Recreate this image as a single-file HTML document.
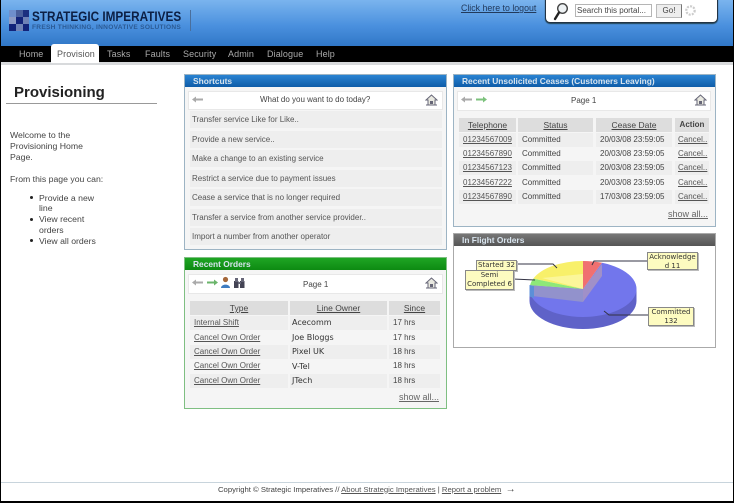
<!DOCTYPE html>
<html><head><meta charset="utf-8"><style>
html,body{margin:0;padding:0}
body{width:734px;height:503px;overflow:hidden;background:#fff;position:relative;font-family:"Liberation Sans",sans-serif;color:#444}
#w{position:absolute;left:0;top:0;width:734px;height:503px;filter:blur(.35px);overflow:hidden}
.a{position:absolute;white-space:nowrap}
.hd{background:linear-gradient(#7ab4ee 0,#4a90de 55%,#2f76c6 100%)}
.nav{font-size:9px;color:#aaa;top:49px;letter-spacing:.1px}
.p{position:absolute;box-sizing:border-box;background:#f5f5f5;border:1px solid #9db4c4}
.ph{position:absolute;left:0;top:0;right:0;height:12px;font:bold 8.4px/12px "Liberation Sans",sans-serif;color:#d8e4ee;padding-left:8px;box-sizing:border-box;white-space:nowrap}
.blue{background:linear-gradient(#2a83d2,#0e5ca8)}
.bar{position:absolute;background:#fff;border:1px solid #e8e8e8;box-sizing:border-box}
.r{position:absolute;left:5px;width:252px;height:17px;background:#eee;font-size:8px;line-height:17px;color:#555;padding-left:2px;box-sizing:border-box;white-space:nowrap}
.c{position:absolute;font-size:8px;line-height:14px;white-space:nowrap;box-sizing:border-box;color:#444}
.u{text-decoration:underline;color:#555}
.th{text-align:center;font-size:8.5px;color:#444;background:#ddd}
.g{background:#eee}
.d{font-family:"DejaVu Sans",sans-serif;color:#333;font-size:8px}
.lb{position:absolute;box-sizing:border-box;background:#fdfbc0;border:1px solid #888;box-shadow:1px 1px 0 #bbb;font:7px/9px "DejaVu Sans",sans-serif;text-align:center;color:#333;white-space:nowrap}
</style></head><body><div id="w">
<div class="a hd" style="left:0;top:0;width:734px;height:47px"></div>
<div class="a" style="left:0;top:46px;width:734px;height:16px;background:#000"></div>
<div class="a" style="left:0;top:62px;width:734px;height:3px;background:#d8dadc"></div>
<div class="a" style="left:51px;top:44px;width:48px;height:19px;background:#fff;border-radius:3px 3px 0 0"></div>

<svg class="a" style="left:9px;top:10px" width="20" height="21" viewBox="0 0 20 21"><rect width="20" height="21" fill="#5a6fa8"/><rect x="0" y="0" width="7" height="7" fill="#6f8fcc"/><rect x="7" y="0" width="7" height="7" fill="#4a5f9c"/><rect x="14" y="0" width="6" height="7" fill="#1c2f7f"/><rect x="0" y="7" width="7" height="7" fill="#8e9cc5"/><rect x="7" y="7" width="7" height="7" fill="#12237a"/><rect x="14" y="7" width="6" height="7" fill="#6f82b6"/><rect x="0" y="14" width="7" height="7" fill="#12237a"/><rect x="7" y="14" width="7" height="7" fill="#6f82b6"/><rect x="14" y="14" width="6" height="7" fill="#12237a"/></svg>
<div class="a" style="left:32px;top:8.5px;font:bold 14px/15px 'Liberation Sans',sans-serif;color:#0c1f44;transform:scaleX(.84);transform-origin:0 0">STRATEGIC IMPERATIVES</div>
<div class="a" style="left:32px;top:23.5px;font:bold 6.6px/8px 'Liberation Sans',sans-serif;color:#2b5a94;letter-spacing:.27px">FRESH THINKING, INNOVATIVE SOLUTIONS</div>
<div class="a" style="left:190px;top:10px;width:1px;height:21px;background:#4a6f9c"></div>

<div class="a nav" style="left:19px">Home</div>
<div class="a nav" style="left:57px;color:#555">Provision</div>
<div class="a nav" style="left:107px">Tasks</div>
<div class="a nav" style="left:145px">Faults</div>
<div class="a nav" style="left:183px">Security</div>
<div class="a nav" style="left:228px">Admin</div>
<div class="a nav" style="left:267px">Dialogue</div>
<div class="a nav" style="left:316px">Help</div>

<div class="a" style="left:461px;top:3px;font-size:8.8px;color:#223a5c;text-decoration:underline">Click here to logout</div>
<div class="a" style="left:545px;top:-6px;width:173px;height:29px;background:#fff;border:1px solid #234;box-sizing:border-box;border-radius:5px;box-shadow:0 1px 1px #245"></div>
<svg class="a" style="left:553px;top:2px" width="16" height="19" viewBox="0 0 16 19"><circle cx="9.5" cy="6.5" r="4.8" fill="#eef2f4" stroke="#444" stroke-width="1.4"/><path d="M6 10.5L2 17" stroke="#222" stroke-width="2.4" stroke-linecap="round"/></svg>
<div class="a" style="left:575px;top:4px;width:77px;height:13px;border:1px solid #b5b5b5;box-sizing:border-box;font-size:8px;line-height:11px;padding-left:1px;color:#444;background:#fff">Search this portal...</div>
<div class="a" style="left:656px;top:4px;width:26px;height:14px;background:#eee;border:1px solid #bbb;border-right:1px solid #777;box-sizing:border-box;font-size:8px;line-height:12px;text-align:center;color:#444">Go!</div>
<svg class="a" style="left:684px;top:4px" width="13" height="13" viewBox="0 0 13 13"><circle cx="6.5" cy="6.5" r="4.2" fill="none" stroke="#ccc" stroke-width="2.2" stroke-dasharray="2 1.2"/></svg>

<div class="a" style="left:14px;top:84px;font:bold 15px/18px 'Liberation Sans',sans-serif;color:#222">Provisioning</div>
<div class="a" style="left:6px;top:103px;width:151px;height:1px;background:#999"></div>
<div class="a" style="left:10px;top:130px;font-size:8.7px;line-height:11px;color:#444">Welcome to the<br>Provisioning Home<br>Page.</div>
<div class="a" style="left:10px;top:174px;font-size:8.7px;line-height:11px;color:#444">From this page you can:</div>
<div class="a" style="left:39px;top:192.5px;font-size:8.7px;line-height:10.8px;color:#444">Provide a new<br>line<br>View recent<br>orders<br>View all orders</div>
<div class="a" style="left:30px;top:196px;width:3px;height:3px;border-radius:2px;background:#222"></div>
<div class="a" style="left:30px;top:218px;width:3px;height:3px;border-radius:2px;background:#222"></div>
<div class="a" style="left:30px;top:239px;width:3px;height:3px;border-radius:2px;background:#222"></div>

<!-- Shortcuts -->
<div class="p" style="left:184px;top:74px;width:263px;height:176px">
<div class="ph blue">Shortcuts</div>
<div class="bar" style="left:3px;top:16px;width:255px;height:19px"></div>
<div class="a" style="left:75px;top:20px;font-size:8px;line-height:10px;color:#444">What do you want to do today?</div>
<svg class="a" style="left:7px;top:21px" width="12" height="7"><path d="M0 3.5L4 .5V2.5H11V4.5H4V6.5Z" fill="#aaa"/></svg>
<svg class="a" style="left:240px;top:19px" width="13" height="12"><path d="M6.5 1L1 6H3V11H10V6H12Z" fill="#e8e8e0" stroke="#667" stroke-width="1"/><path d="M1 11H12" stroke="#667"/><rect x="5" y="7" width="3" height="3" fill="#667"/></svg>
<div class="r" style="top:36px">Transfer service Like for Like..</div>
<div class="r" style="top:55.5px">Provide a new service..</div>
<div class="r" style="top:75px">Make a change to an existing service</div>
<div class="r" style="top:94.5px">Restrict a service due to payment issues</div>
<div class="r" style="top:114px">Cease a service that is no longer required</div>
<div class="r" style="top:133.5px">Transfer a service from another service provider..</div>
<div class="r" style="top:153px">Import a number from another operator</div>
</div>

<!-- Recent Orders -->
<div class="p" style="left:184px;top:257px;width:263px;height:152px;border-color:#7fbf82">
<div class="ph" style="background:linear-gradient(#1fa524,#0d8a12)">Recent Orders</div>
<div class="bar" style="left:3px;top:16px;width:255px;height:20px"></div>
<svg class="a" style="left:7px;top:21px" width="12" height="7"><path d="M0 3.5L4 .5V2.5H11V4.5H4V6.5Z" fill="#aaa"/></svg>
<svg class="a" style="left:21px;top:21px" width="12" height="7"><path d="M12 3.5L8 .5V2.5H1V4.5H8V6.5Z" fill="#6bb56b"/></svg>
<svg class="a" style="left:35px;top:18px" width="11" height="13"><circle cx="5.5" cy="3.5" r="2.6" fill="#a5683a"/><path d="M1 12C1 7.500 10 7.500 10 12Z" fill="#3f7cc0"/></svg>
<svg class="a" style="left:49px;top:20px" width="11" height="10"><rect x="0" y="3" width="4.500" height="7" fill="#445"/><rect x="6" y="3" width="4.500" height="7" fill="#445"/><rect x="1" y="0" width="3" height="4" fill="#667"/><rect x="7" y="0" width="3" height="4" fill="#667"/><rect x="4" y="4" width="3" height="2" fill="#667"/></svg>
<div class="a" style="left:118px;top:22px;font-size:8px;line-height:10px">Page 1</div>
<svg class="a" style="left:240px;top:19px" width="13" height="12"><path d="M6.5 1L1 6H3V11H10V6H12Z" fill="#e8e8e0" stroke="#667" stroke-width="1"/><path d="M1 11H12" stroke="#667"/><rect x="5" y="7" width="3" height="3" fill="#667"/></svg>
<div class="c th" style="left:5px;top:43px;width:98px"><span class="u" style="color:#444">Type</span></div>
<div class="c th" style="left:105px;top:43px;width:97px"><span class="u" style="color:#444">Line Owner</span></div>
<div class="c th" style="left:204px;top:43px;width:51px"><span class="u" style="color:#444">Since</span></div>
<div class="c g" style="left:5px;top:58px;width:98px;padding-left:4px"><span class="u">Internal Shift</span></div><div class="c g d" style="left:105px;top:58px;width:97px;padding-left:2px">Acecomm</div><div class="c g" style="left:204px;top:58px;width:51px;padding-left:4px">17 hrs</div>
<div class="c" style="left:5px;top:72.500px;width:98px;padding-left:4px"><span class="u">Cancel Own Order</span></div><div class="c d" style="left:105px;top:72.500px;padding-left:2px">Joe Bloggs</div><div class="c" style="left:204px;top:72.500px;padding-left:4px">17 hrs</div>
<div class="c g" style="left:5px;top:87px;width:98px;padding-left:4px"><span class="u">Cancel Own Order</span></div><div class="c g d" style="left:105px;top:87px;width:97px;padding-left:2px">Pixel UK</div><div class="c g" style="left:204px;top:87px;width:51px;padding-left:4px">18 hrs</div>
<div class="c" style="left:5px;top:101px;width:98px;padding-left:4px"><span class="u">Cancel Own Order</span></div><div class="c d" style="left:105px;top:101.500px;padding-left:2px">V-Tel</div><div class="c" style="left:204px;top:101px;padding-left:4px">18 hrs</div>
<div class="c g" style="left:5px;top:116px;width:98px;padding-left:4px"><span class="u">Cancel Own Order</span></div><div class="c g d" style="left:105px;top:116px;width:97px;padding-left:2px">JTech</div><div class="c g" style="left:204px;top:116px;width:51px;padding-left:4px">18 hrs</div>
<div class="a u" style="right:7px;top:133px;font-size:9px;line-height:12px;color:#666">show all...</div>
</div>

<!-- Ceases -->
<div class="p" style="left:453px;top:74px;width:263px;height:153px">
<div class="ph blue">Recent Unsolicited Ceases (Customers Leaving)</div>
<div class="bar" style="left:3px;top:16px;width:254px;height:20px"></div>
<svg class="a" style="left:7px;top:21px" width="12" height="7"><path d="M0 3.5L4 .5V2.5H11V4.5H4V6.5Z" fill="#aaa"/></svg>
<svg class="a" style="left:21px;top:21px" width="12" height="7"><path d="M12 3.5L8 .5V2.5H1V4.5H8V6.5Z" fill="#7cc27c"/></svg>
<div class="a" style="left:117px;top:21px;font-size:8px;line-height:10px">Page 1</div>
<svg class="a" style="left:240px;top:19px" width="13" height="12"><path d="M6.5 1L1 6H3V11H10V6H12Z" fill="#e8e8e0" stroke="#667" stroke-width="1"/><path d="M1 11H12" stroke="#667"/><rect x="5" y="7" width="3" height="3" fill="#667"/></svg>
<div class="c th" style="left:5px;top:43px;width:57px"><span class="u" style="color:#444">Telephone</span></div>
<div class="c th" style="left:64px;top:43px;width:75px"><span class="u" style="color:#444">Status</span></div>
<div class="c th" style="left:142px;top:43px;width:76px"><span class="u" style="color:#444">Cease Date</span></div>
<div class="c th" style="left:221px;top:43px;width:34px;font-weight:bold;font-size:8px">Action</div>

<div class="c g" style="left:5px;top:57.500px;width:57px;padding-left:4px"><span class="u">01234567009</span></div><div class="c g" style="left:64px;top:57.500px;width:75px;padding-left:4px">Committed</div><div class="c g" style="left:142px;top:57.500px;width:76px;padding-left:4px">20/03/08 23:59:05</div><div class="c g" style="left:221px;top:57.500px;width:34px;padding-left:3px"><span class="u">Cancel..</span></div>
<div class="c" style="left:5px;top:72px;padding-left:4px"><span class="u">01234567890</span></div><div class="c" style="left:64px;top:72px;padding-left:4px">Committed</div><div class="c" style="left:142px;top:72px;padding-left:4px">20/03/08 23:59:05</div><div class="c" style="left:221px;top:72px;padding-left:3px"><span class="u">Cancel..</span></div>
<div class="c g" style="left:5px;top:86px;width:57px;padding-left:4px"><span class="u">01234567123</span></div><div class="c g" style="left:64px;top:86px;width:75px;padding-left:4px">Committed</div><div class="c g" style="left:142px;top:86px;width:76px;padding-left:4px">20/03/08 23:59:05</div><div class="c g" style="left:221px;top:86px;width:34px;padding-left:3px"><span class="u">Cancel..</span></div>
<div class="c" style="left:5px;top:100.500px;padding-left:4px"><span class="u">01234567222</span></div><div class="c" style="left:64px;top:100.500px;padding-left:4px">Committed</div><div class="c" style="left:142px;top:100.500px;padding-left:4px">20/03/08 23:59:05</div><div class="c" style="left:221px;top:100.500px;padding-left:3px"><span class="u">Cancel..</span></div>
<div class="c g" style="left:5px;top:115px;width:57px;padding-left:4px"><span class="u">01234567890</span></div><div class="c g" style="left:64px;top:115px;width:75px;padding-left:4px">Committed</div><div class="c g" style="left:142px;top:115px;width:76px;padding-left:4px">17/03/08 23:59:05</div><div class="c g" style="left:221px;top:115px;width:34px;padding-left:3px"><span class="u">Cancel..</span></div>
<div class="a u" style="right:7px;top:133px;font-size:9px;line-height:12px;color:#666">show all...</div>
</div>

<!-- In Flight -->
<div class="p" style="left:453px;top:233px;width:263px;height:115px;background:#fff;border-color:#aaa">
<div class="ph" style="background:linear-gradient(#777,#555)">In Flight Orders</div>
</div>
<svg class="a" style="left:450px;top:228px" width="270" height="125" viewBox="0 0 270 125">
<!-- side wall -->
<path d="M79.5 61V73A53.5 28 0 0 0 186.500 73V61Z" fill="#5f62c8"/>
<!-- top: blue slice -->
<path d="M133 61L152 34.800A53.5 28 0 1 1 80 57.200Z" fill="#7276ec"/>
<!-- red slice -->
<path d="M133 61L133 33A53.5 28 0 0 1 152 34.800Z" fill="#f07070"/>
<!-- yellow slice -->
<path d="M133 61L83.300 50.600A53.5 28 0 0 1 133 33Z" fill="#f8f06a"/>
<path d="M133 61L92 50 133 46Z" fill="#fbf69a"/>
<!-- green slice -->
<path d="M133 61L80 57.200A53.5 28 0 0 1 83.300 50.600Z" fill="#8ee878"/>
<!-- translucent inner walls -->
<path d="M80 57.200L133 61V74L82 68Z" fill="#9292cc"/>
<path d="M79.5 57V68.500L84 70V58Z" fill="#5c8fd8"/>
<path d="M133 61L152 36V48L133 74Z" fill="#a090c8"/>
<g fill="none" stroke="#334" stroke-width="1"><path d="M197 33H144L142 37"/><path d="M66 36H103L107 40"/><path d="M63 51L85 52"/><path d="M198 87H159L154 83"/></g>
</svg>
<div class="lb" style="left:647px;top:252px;width:51px;height:18px">Acknowledge<br>d 11</div>
<div class="lb" style="left:476px;top:260px;width:41px;height:11px">Started 32</div>
<div class="lb" style="left:465px;top:270px;width:49px;height:20px">Semi<br>Completed 6</div>
<div class="lb" style="left:648px;top:307px;width:46px;height:19px">Committed<br>132</div>

<!-- Footer -->
<div class="a" style="left:0;top:482px;width:734px;height:1px;background:#c8d4dc"></div>
<div class="a" style="left:218px;top:484.500px;font-size:7.700px;line-height:10px;color:#444">Copyright © Strategic Imperatives // <span class="u">About Strategic Imperatives</span> | <span class="u">Report a problem</span> &nbsp;<span style="font-size:10px">→</span></div>
<div class="a" style="left:0;top:501px;width:734px;height:2px;background:#000"></div>
<div class="a" style="left:0;top:0;width:1px;height:503px;background:#000"></div>
<div class="a" style="left:733px;top:0;width:1px;height:503px;background:#000"></div>
</div></body></html>
